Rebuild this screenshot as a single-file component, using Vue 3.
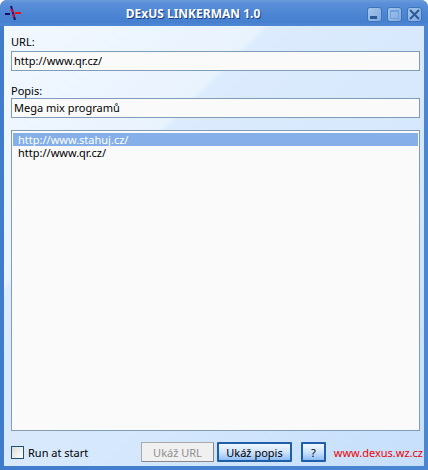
<script setup>
const links = [
  { url: 'http://www.stahuj.cz/', selected: true },
  { url: 'http://www.qr.cz/', selected: false }
]
</script>

<template>
  <div class="window">
    <div class="titlebar">
      <svg class="app-icon" width="18" height="18" viewBox="0 0 18 18">
        <path d="M0 10h5" stroke="#10106a" stroke-width="2" />
        <path d="M10 9h6" stroke="#f01010" stroke-width="2" />
        <path d="M6 2l2 7" stroke="#10106a" stroke-width="2" />
        <path d="M6 5l2 3" stroke="#e01030" stroke-width="2" />
        <path d="M8 9l2 7" stroke="#10106a" stroke-width="2" />
        <path d="M8 10l1 3" stroke="#e01030" stroke-width="2" />
      </svg>
      <span class="title">DExUS LINKERMAN 1.0</span>
      <div class="controls">
        <div class="ctl"><span class="min-mark"></span></div>
        <div class="ctl"><span class="max-mark"></span></div>
        <div class="ctl">
          <svg width="13" height="13" viewBox="0 0 13 13">
            <path d="M2 2l9 9M11 2l-9 9" stroke="#2a5a98" stroke-width="2" fill="none" />
          </svg>
        </div>
      </div>
    </div>
    <div class="client">
      <label class="lbl first">URL:</label>
      <div class="field url">http://www.qr.cz/</div>
      <label class="lbl second">Popis:</label>
      <div class="field">Mega mix programů</div>
      <div class="listbox">
        <div v-for="l in links" :key="l.url" class="row" :class="{ selected: l.selected }">{{ l.url }}</div>
      </div>
      <div class="footer">
        <div class="check">
          <span class="box"></span>
          <span>Run at start</span>
        </div>
        <div class="actions">
          <button class="btn disabled">Ukáž URL</button>
          <button class="btn popis">Ukáž popis</button>
          <button class="btn help">?</button>
        </div>
        <span class="site">www.dexus.wz.cz</span>
      </div>
    </div>
  </div>
</template>

<style>
html, body {
  margin: 0;
  background: #fff;
}
</style>

<style scoped>
.window {
  width: 428px;
  height: 470px;
  box-sizing: border-box;
  display: flex;
  flex-direction: column;
  background: linear-gradient(90deg, #3f7ccb, #4a86d2);
  border-radius: 7px 7px 0 0;
  overflow: hidden;
  font-family: "Noto Sans", "Liberation Sans", sans-serif;
  font-size: 11px;
  color: #000;
  padding: 0 4px 4px;
}
.titlebar {
  height: 26px;
  flex: none;
  display: flex;
  align-items: center;
  position: relative;
  margin: 0 -4px;
  padding: 0 4px;
  background: linear-gradient(#6a9bdc 0, #5b90d8 3px, #4c85d3 14px, #4580cf 22px, #4f88d4 26px);
}
.app-icon {
  margin: 0 0 0 1px;
  flex: none;
}
.title {
  position: absolute;
  left: 0;
  right: 42px;
  text-align: center;
  color: #fff;
  font-weight: bold;
  font-size: 12px;
  text-shadow: 1px 1px 0 #1d3f8a;
}
.controls {
  margin-left: auto;
  margin-right: 2px;
  margin-top: 2px;
  display: flex;
  gap: 5px;
  position: relative;
}
.ctl {
  width: 15px;
  height: 15px;
  box-sizing: border-box;
  border: 1px solid #3f74b8;
  border-radius: 3px;
  background: linear-gradient(135deg, #a6c6ec, #7fa9e0);
  display: flex;
  align-items: center;
  justify-content: center;
  position: relative;
}
.min-mark {
  position: absolute;
  left: 2px;
  bottom: 2px;
  width: 7px;
  height: 3px;
  background: #2a5a98;
}
.max-mark {
  width: 9px;
  height: 9px;
  box-sizing: border-box;
  border: 1px solid #6f9fdc;
  border-top-width: 2px;
}
.client {
  flex: 1;
  display: flex;
  flex-direction: column;
  padding: 0 4px 0 7px;
  background: linear-gradient(135deg, #f2f8ff 0, #e9f3fe 30%, #dcebfd 31%, #d6e8fd 60%, #c6dffc 100%);
}
.lbl {
  line-height: 13px;
  display: block;
}
.first {
  margin-top: 9px;
  margin-bottom: 3px;
}
.second {
  margin-top: 13px;
  margin-bottom: 1px;
}
.field {
  height: 20px;
  box-sizing: border-box;
  border: 1px solid #7f9db9;
  background: #fafafa;
  line-height: 18px;
  padding-left: 2px;
}
.listbox {
  margin-top: 12px;
  height: 301px;
  flex: none;
  box-sizing: border-box;
  border: 1px solid #7f9db9;
  background: #fafafa;
  padding: 2px 1px;
}
.row {
  height: 13px;
  line-height: 13px;
  padding-left: 5px;
}
.row.selected {
  background: #84afe9;
  color: #fff;
}
.footer {
  margin-top: 11px;
  display: flex;
  align-items: center;
  height: 20px;
  position: relative;
}
.check {
  display: flex;
  align-items: center;
  gap: 4px;
}
.box {
  width: 13px;
  height: 13px;
  box-sizing: border-box;
  border: 1px solid #1c5180;
  background: linear-gradient(135deg, #dcdcd7, #ffffff);
}
.actions {
  display: flex;
  position: absolute;
  left: 130px;
}
.btn {
  height: 20px;
  box-sizing: border-box;
  padding: 0;
  font: inherit;
  border-radius: 1px;
  border: 2px solid #1f5fa8;
  background: linear-gradient(#f0f7ff, #cfe4fc 50%, #8fbef7);
  color: #000;
}
.btn.disabled {
  width: 73px;
  color: #8f8f8f;
  border: 1px solid #aaa;
  background: #f0f0f0;
  border-bottom-color: #888;
  border-right-color: #888;
}
.btn.popis {
  width: 75px;
  margin-left: 3px;
}
.btn.help {
  width: 25px;
  margin-left: 9px;
}
.site {
  margin-left: auto;
  margin-right: -3px;
  color: #f00000;
  font-size: 11px;
}
</style>
